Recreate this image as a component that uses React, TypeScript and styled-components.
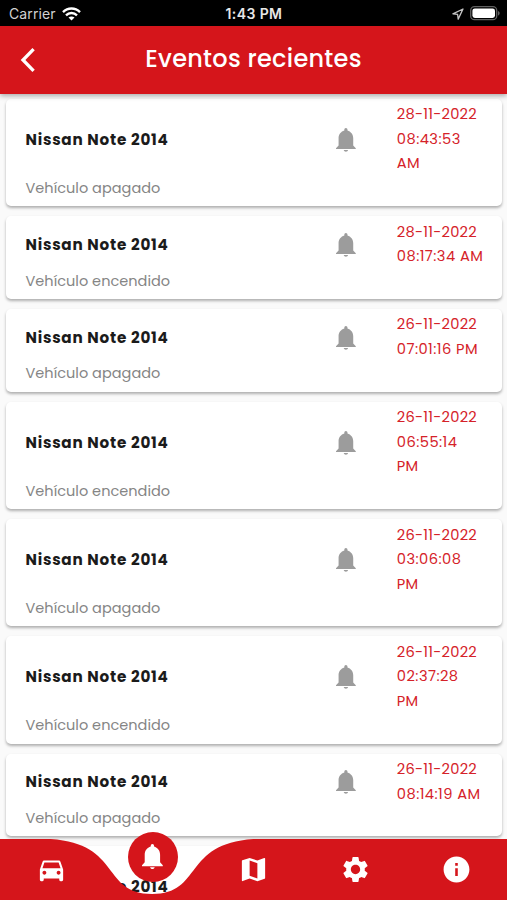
import React from "react";
import styled, { createGlobalStyle } from "styled-components";
import { MdDirectionsCar, MdMap, MdSettings, MdInfo } from "react-icons/md";

const RED = "#d5151b";

const GlobalStyle = createGlobalStyle`
  *, *::before, *::after { box-sizing: border-box; }
  html, body { margin: 0; padding: 0; overflow: hidden; background: #fafafa; }
`;

const Screen = styled.div`
  position: relative;
  display: flex;
  flex-direction: column;
  width: 507px;
  height: 900px;
  overflow: hidden;
  background: #fafafa;
  font-family: Poppins, Inter, sans-serif;
`;

const StatusBar = styled.div`
  flex: none;
  display: grid;
  grid-template-columns: 1fr auto 1fr;
  align-items: center;
  height: 25.5px;
  padding: 2px 7px 0 9px;
  background: #000;
  color: #e8e8e8;
  font-family: Inter, sans-serif;
  font-size: 14px;
  line-height: 20px;
`;

const Carrier = styled.div`
  display: flex;
  align-items: center;
  gap: 6px;
  color: #d2d2d2;
  letter-spacing: 0.1px;
`;

const Clock = styled.div`
  margin-left: -1px;
  font-weight: 600;
  letter-spacing: 0.4px;
`;

const StatusIcons = styled.div`
  display: flex;
  align-items: center;
  justify-content: flex-end;
  gap: 6px;
`;

const Header = styled.header`
  position: relative;
  z-index: 1;
  flex: none;
  display: grid;
  grid-template-columns: 56px 1fr 56px;
  align-items: center;
  height: 68px;
  background: ${RED};
  color: #fff;
  box-shadow: 0 2px 5px rgba(0, 0, 0, 0.32);
`;

const BackButton = styled.button`
  display: flex;
  margin: 0 0 0 20px;
  padding: 0;
  border: 0;
  background: none;
  color: inherit;
`;

const Title = styled.h1`
  margin: -1px 0 0;
  text-align: center;
  font-size: 24px;
  font-weight: 500;
  line-height: 36px;
  letter-spacing: 0.28px;
`;

const EventList = styled.main`
  flex: 1;
  min-height: 0;
  overflow: hidden;
  display: flex;
  flex-direction: column;
  gap: 9.9px;
  padding: 5.4px 5px 0 6px;
`;

const Card = styled.article`
  flex: none;
  display: grid;
  grid-template-columns: 305px 66.3px 1fr;
  align-items: center;
  padding: 3.5px 8px 5.9px 19.5px;
  border-radius: 5px;
  background: #fff;
  box-shadow: 0 2px 3px rgba(0, 0, 0, 0.3);
`;

const Vehicle = styled.h2`
  margin: 2px 0 0;
  color: #1b1b1b;
  font-size: 15.2px;
  font-weight: 700;
  line-height: 24.5px;
  letter-spacing: 0.75px;
`;

const Bell = styled.svg<{ $size: number }>`
  display: block;
  width: ${(p) => p.$size}px;
  height: ${(p) => p.$size * 1.2}px;
  fill: currentColor;
`;

const BellCell = styled.div`
  padding: 1.5px 0 0 5.3px;
  color: #9c9c9c;
`;

const Stamp = styled.div`
  color: #d52229;
  font-size: 14.65px;
  line-height: 24.5px;
`;

const StampLine = styled.div<{ $tracking: number }>`
  width: max-content;
  letter-spacing: ${(p) => p.$tracking}px;
`;

const Detail = styled.p`
  grid-column: 1 / -1;
  margin: 0;
  color: #858585;
  font-size: 14.5px;
  line-height: 24.5px;
  letter-spacing: 0.02px;
`;

const BottomNav = styled.nav`
  position: absolute;
  left: 0;
  bottom: 0;
  width: 507px;
  height: 61px;
`;

const NavShape = styled.svg`
  position: absolute;
  inset: 0;
  display: block;
`;

const NavItems = styled.div`
  position: relative;
  display: grid;
  grid-template-columns: repeat(5, 1fr);
  justify-items: center;
  align-items: center;
  height: 61px;
  padding-left: 1px;
  color: #fff;
  font-size: 31px;
`;

const NavButton = styled.button<{ $active?: boolean }>`
  display: flex;
  align-items: center;
  justify-content: center;
  width: 50px;
  height: 50px;
  padding: 0;
  border: 0;
  border-radius: 50%;
  background: ${(p) => (p.$active ? RED : "transparent")};
  color: inherit;
  font-size: inherit;
  transform: ${(p) => (p.$active ? "translateY(-13px)" : "none")};
`;

interface VehicleEvent {
  detail: string;
  date: string;
  time: string[];
}

const events: VehicleEvent[] = [
  { detail: "Vehículo apagado", date: "28-11-2022", time: ["08:43:53", "AM"] },
  { detail: "Vehículo encendido", date: "28-11-2022", time: ["08:17:34 AM"] },
  { detail: "Vehículo apagado", date: "26-11-2022", time: ["07:01:16 PM"] },
  { detail: "Vehículo encendido", date: "26-11-2022", time: ["06:55:14", "PM"] },
  { detail: "Vehículo apagado", date: "26-11-2022", time: ["03:06:08", "PM"] },
  { detail: "Vehículo encendido", date: "26-11-2022", time: ["02:37:28", "PM"] },
  { detail: "Vehículo apagado", date: "26-11-2022", time: ["08:14:19 AM"] },
  { detail: "Vehículo encendido", date: "26-11-2022", time: ["07:52:40", "AM"] },
];

function BellIcon({ size }: { size: number }) {
  return (
    <Bell $size={size} viewBox="0 0 20 24">
      <path d="M0 21.3V20.4L2.6 17.6V10.3C2.6 6.4 5 3.6 8.4 2.5V1.6A1.6 1.6 0 0 1 11.6 1.6V2.5C15 3.6 17.4 6.4 17.4 10.3V17.6L20 20.4V21.3Z" />
      <path d="M7.8 22.3H12.2C12 23.4 11 24 10 24S8 23.4 7.8 22.3Z" />
    </Bell>
  );
}

function WifiIcon() {
  return (
    <svg width="19" height="14" viewBox="0 0 19 14" fill="none" stroke="#fff" strokeWidth="2.4">
      <path d="M1 5.1C5.8.3 13.2.3 18 5.1" />
      <path d="M4 8.3c3.1-3 7.9-3 11 0" />
      <path d="M9.5 13.6 6.5 10.6c1.7-1.5 4.3-1.5 6 0z" fill="#fff" stroke="none" />
    </svg>
  );
}

function LocationIcon() {
  return (
    <svg width="12" height="12" viewBox="0 0 12 12" fill="none" stroke="#c4c4c4" strokeWidth="1.3" strokeLinejoin="round">
      <path d="M11 1 .9 5.8l4.7.5.6 4.8z" />
    </svg>
  );
}

function BatteryIcon() {
  return (
    <svg width="30" height="15" viewBox="0 0 30 15">
      <rect x=".7" y=".7" width="26" height="13" rx="3.8" fill="none" stroke="#616161" strokeWidth="1.3" />
      <rect x="2.4" y="2.4" width="22.6" height="9.6" rx="2.4" fill="#fff" />
      <path d="M28 5c2.2.8 2.2 3.8 0 4.6z" fill="#616161" />
    </svg>
  );
}

export default function App() {
  return (
    <Screen>
      <GlobalStyle />
      <StatusBar>
        <Carrier>
          Carrier
          <WifiIcon />
        </Carrier>
        <Clock>1:43 PM</Clock>
        <StatusIcons>
          <LocationIcon />
          <BatteryIcon />
        </StatusIcons>
      </StatusBar>
      <Header>
        <BackButton aria-label="Atrás">
          <svg width="16" height="24" viewBox="0 0 16 24" fill="none" stroke="#fff" strokeWidth="3.3">
            <path d="M13.6 1.2 3 12l10.6 10.8" />
          </svg>
        </BackButton>
        <Title>Eventos recientes</Title>
      </Header>
      <EventList>
        {events.map((event, i) => (
          <Card key={i}>
            <Vehicle>Nissan Note 2014</Vehicle>
            <BellCell>
              <BellIcon size={19.8} />
            </BellCell>
            <Stamp>
              <StampLine $tracking={0.25}>{event.date}</StampLine>
              {event.time.map((part) => (
                <StampLine key={part} $tracking={part.length > 2 ? 0.45 : 0.3}>
                  {part}
                </StampLine>
              ))}
            </Stamp>
            <Detail>{event.detail}</Detail>
          </Card>
        ))}
      </EventList>
      <BottomNav>
        <NavShape width="507" height="61" viewBox="0 0 507 61">
          <path
            d="M0 0H50.7C121.7 4.6 101.4 55 152.1 55S182.5 4.6 253.5 0H507V61H0Z"
            fill={RED}
          />
        </NavShape>
        <NavItems>
          <NavButton aria-label="Vehículos"><MdDirectionsCar /></NavButton>
          <NavButton $active aria-label="Eventos"><BellIcon size={20.8} /></NavButton>
          <NavButton aria-label="Mapa"><MdMap /></NavButton>
          <NavButton aria-label="Ajustes"><MdSettings /></NavButton>
          <NavButton aria-label="Información"><MdInfo /></NavButton>
        </NavItems>
      </BottomNav>
    </Screen>
  );
}
